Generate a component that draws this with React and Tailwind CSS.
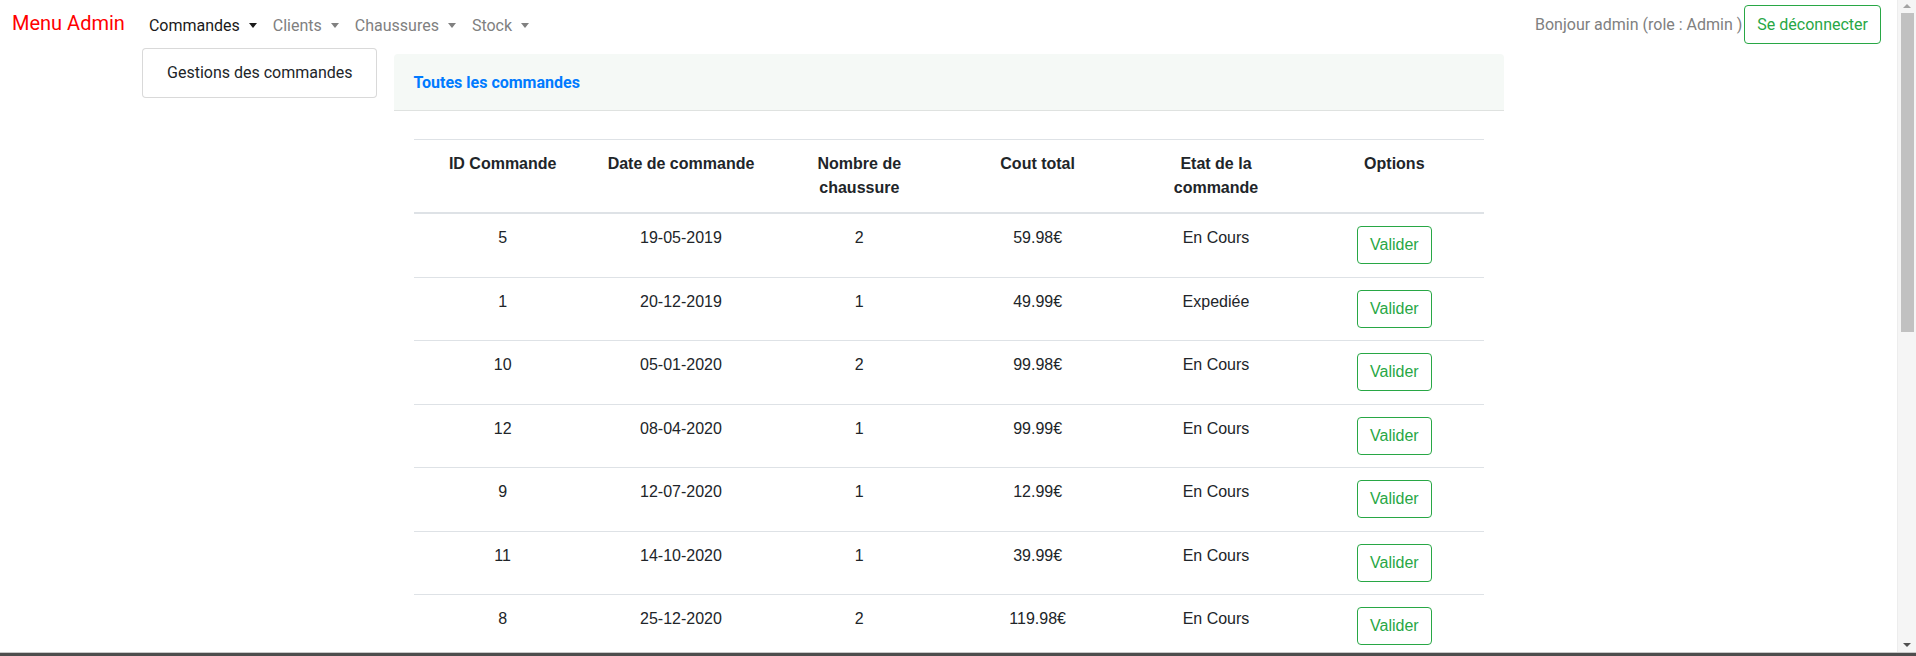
import { useState } from 'react'

const orders = [
  { id: '5', date: '19-05-2019', qty: '2', total: '59.98€', state: 'En Cours' },
  { id: '1', date: '20-12-2019', qty: '1', total: '49.99€', state: 'Expediée' },
  { id: '10', date: '05-01-2020', qty: '2', total: '99.98€', state: 'En Cours' },
  { id: '12', date: '08-04-2020', qty: '1', total: '99.99€', state: 'En Cours' },
  { id: '9', date: '12-07-2020', qty: '1', total: '12.99€', state: 'En Cours' },
  { id: '11', date: '14-10-2020', qty: '1', total: '39.99€', state: 'En Cours' },
  { id: '8', date: '25-12-2020', qty: '2', total: '119.98€', state: 'En Cours' },
]

function Caret() {
  return (
    <span className="inline-block ml-[9px] align-[3px] border-t-[5px] border-x-[4px] border-x-transparent border-t-current" />
  )
}

function NavLink({ label, active }) {
  return (
    <a
      href="#"
      className={`flex items-center px-2 py-2 leading-6 ${active ? 'text-[#1a1a1a]' : 'text-[#808080]'}`}
    >
      {label}
      <Caret />
    </a>
  )
}

function Scrollbar() {
  return (
    <div className="w-[19px] shrink-0 flex flex-col items-center bg-[#f5f5f5] border-l border-[#ededed]">
      <svg width="10" height="13" viewBox="0 0 10 13" className="shrink-0">
        <path d="M1 8 L5 4 L9 8 Z" fill="#a3a3a3" />
      </svg>
      <div className="w-[13px] h-[319px] bg-[#c1c1c1]" />
      <div className="flex-1" />
      <svg width="10" height="13" viewBox="0 0 10 13" className="shrink-0">
        <path d="M1 4 L9 4 L5 8 Z" fill="#505050" />
      </svg>
    </div>
  )
}

export default function App() {
  const [open] = useState(true)

  return (
    <div className="h-[656px] w-full flex flex-col overflow-hidden bg-white">
      <div className="flex flex-1 min-h-0">
        <main className="flex-1 min-w-0 relative overflow-hidden font-['Roboto',sans-serif] text-base">
          {/* Navbar */}
          <nav className="h-[49px] flex items-center pl-3 pr-4">
            <a href="#" className="text-[20px] leading-[30px] text-[#ff0000] mr-4 -mt-[3px]">
              Menu Admin
            </a>
            <div className="flex items-center mt-[2px]">
              <NavLink label="Commandes" active />
              <NavLink label="Clients" />
              <NavLink label="Chaussures" />
              <NavLink label="Stock" />
            </div>
            <div className="ml-auto flex items-center">
              <span className="text-[#808080] leading-6 mr-[2px]">Bonjour admin (role : Admin )</span>
              <button className="h-[39px] px-3 border border-[#28a745] rounded text-[#28a745] leading-6">
                Se déconnecter
              </button>
            </div>
          </nav>

          {open && (
            <div className="absolute left-[142px] top-[48px] w-[235px] py-2 bg-white border border-black/15 rounded z-10">
              <a href="#" className="block px-6 py-1 leading-6 text-[#212529] whitespace-nowrap">
                Gestions des commandes
              </a>
            </div>
          )}

          {/* Card */}
          <section className="w-[1110px] mx-auto mt-[5px]">
            <div className="h-[57px] flex items-center px-5 pt-[2px] bg-[#f5f9f6] rounded-t border-b border-[#dfe2e0]">
              <a href="#" className="text-base font-bold text-[#007bff]">
                Toutes les commandes
              </a>
            </div>
            <div className="px-5 pt-7">
              <table className="w-full table-fixed border-collapse font-['Liberation_Sans',Arial,sans-serif] text-[#212529] text-base leading-6">
                <thead>
                  <tr className="border-t border-b-2 border-[#dee2e6]">
                    {['ID Commande', 'Date de commande', 'Nombre de chaussure', 'Cout total', 'Etat de la commande', 'Options'].map((h) => (
                      <th key={h} className="p-3 align-top text-center font-bold">
                        {h}
                      </th>
                    ))}
                  </tr>
                </thead>
                <tbody>
                  {orders.map((o) => (
                    <tr key={o.id} className="border-b border-[#dee2e6]">
                      <td className="p-3 align-top text-center">{o.id}</td>
                      <td className="p-3 align-top text-center">{o.date}</td>
                      <td className="p-3 align-top text-center">{o.qty}</td>
                      <td className="p-3 align-top text-center">{o.total}</td>
                      <td className="p-3 align-top text-center">{o.state}</td>
                      <td className="px-3 pt-3 pb-[12.5px] align-top text-center">
                        <button className="h-[38px] px-3 border border-[#28a745] rounded text-[#28a745] leading-6">
                          Valider
                        </button>
                      </td>
                    </tr>
                  ))}
                </tbody>
              </table>
            </div>
          </section>
        </main>
        <Scrollbar />
      </div>
      <div className="h-[4px] shrink-0 border-t border-[#c8c8c8] bg-[#4d4d4d]" />
    </div>
  )
}
